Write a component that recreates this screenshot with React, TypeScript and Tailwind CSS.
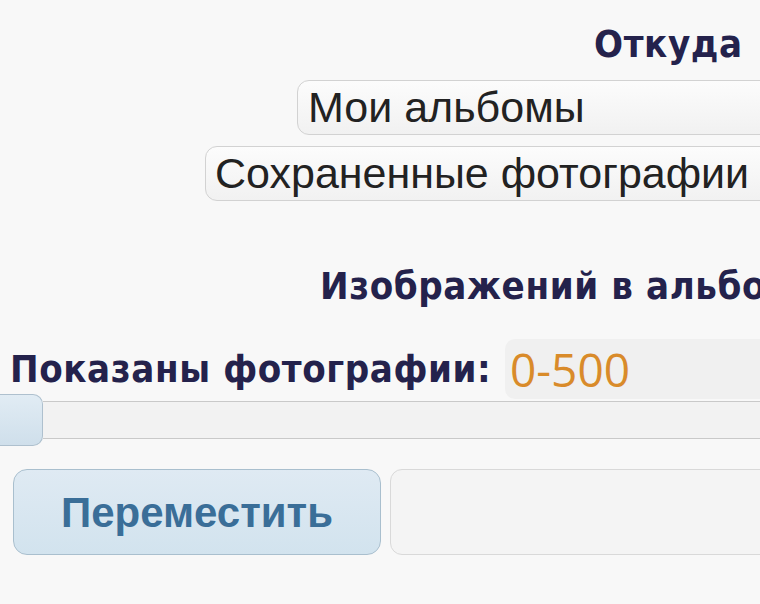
import React from "react";

export default function App() {
  const bold = { fontFamily: '"DejaVu Sans Condensed", "DejaVu Sans", sans-serif', fontStretch: "condensed" as const };
  return (
    <div className="w-[760px] h-[604px] overflow-hidden bg-[#f8f8f8] text-[#222]" style={{ fontFamily: '"Liberation Sans", Arial, sans-serif' }}>
      <div className="w-[1000px] flex flex-col">
        {/* Откуда */}
        <div className="h-[80px] flex items-center pl-[594px] pt-[8px]">
          <span className="text-[38px] font-bold text-[#24224c] tracking-[0.6px]" style={bold}>Откуда</span>
        </div>
        {/* Мои альбомы */}
        <div className="pl-[297px]">
          <div className="h-[55px] flex items-center pl-[10px] rounded-[12px] border border-[#d2d2d2] bg-gradient-to-b from-[#fcfcfc] to-[#f1f1f1] text-[43px] leading-none">
            Мои альбомы
          </div>
        </div>
        {/* Сохраненные фотографии */}
        <div className="pl-[205px] mt-[11px]">
          <div className="h-[55px] flex items-center pl-[9px] rounded-[12px] border border-[#d2d2d2] bg-gradient-to-b from-[#fcfcfc] to-[#f1f1f1] text-[43px] leading-none">
            Сохраненные фотографии
          </div>
        </div>
        {/* Изображений в альбоме */}
        <div className="h-[80px] mt-[45px] flex items-center pl-[320px]">
          <span className="text-[38px] font-bold text-[#24224c] tracking-[0.6px] whitespace-nowrap" style={bold}>Изображений в альбоме</span>
        </div>
        {/* Показаны фотографии */}
        <div className="h-[60px] flex items-center mt-[13px]">
          <span className="pl-[10px] w-[505px] text-[38px] font-bold text-[#24224c] tracking-[0.6px] whitespace-nowrap" style={bold}>Показаны фотографии:</span>
          <div className="h-[60px] flex-1 flex items-center pl-[5px] rounded-[10px] bg-[#f0f0f0]">
            <span className="text-[46px] text-[#d98b2a]" style={{ fontFamily: '"Open Sans", sans-serif' }}>0-500</span>
          </div>
        </div>
        {/* slider */}
        <div className="h-[52px] mt-[-5px] flex items-center">
          <div className="w-[43px] h-[52px] rounded-r-[10px] border border-l-0 border-[#aec0ce] bg-gradient-to-b from-[#e1ecf4] to-[#cfdfeb] shrink-0" />
          <div className="flex-1 h-[38px] border-y border-[#c9c9c9] bg-[#f2f2f2]" />
        </div>
        {/* buttons */}
        <div className="flex mt-[23px] pl-[13px] gap-[9px]">
          <div className="w-[368px] h-[86px] rounded-[14px] border border-[#a9bfce] bg-gradient-to-b from-[#dfeaf3] to-[#d2e3ee] flex items-center justify-center">
            <span className="text-[42px] font-bold text-[#3a6e98]">Переместить</span>
          </div>
          <div className="flex-1 h-[86px] rounded-[12px] border border-[#d9d9d9] bg-[#f4f4f4]" />
        </div>
      </div>
    </div>
  );
}
